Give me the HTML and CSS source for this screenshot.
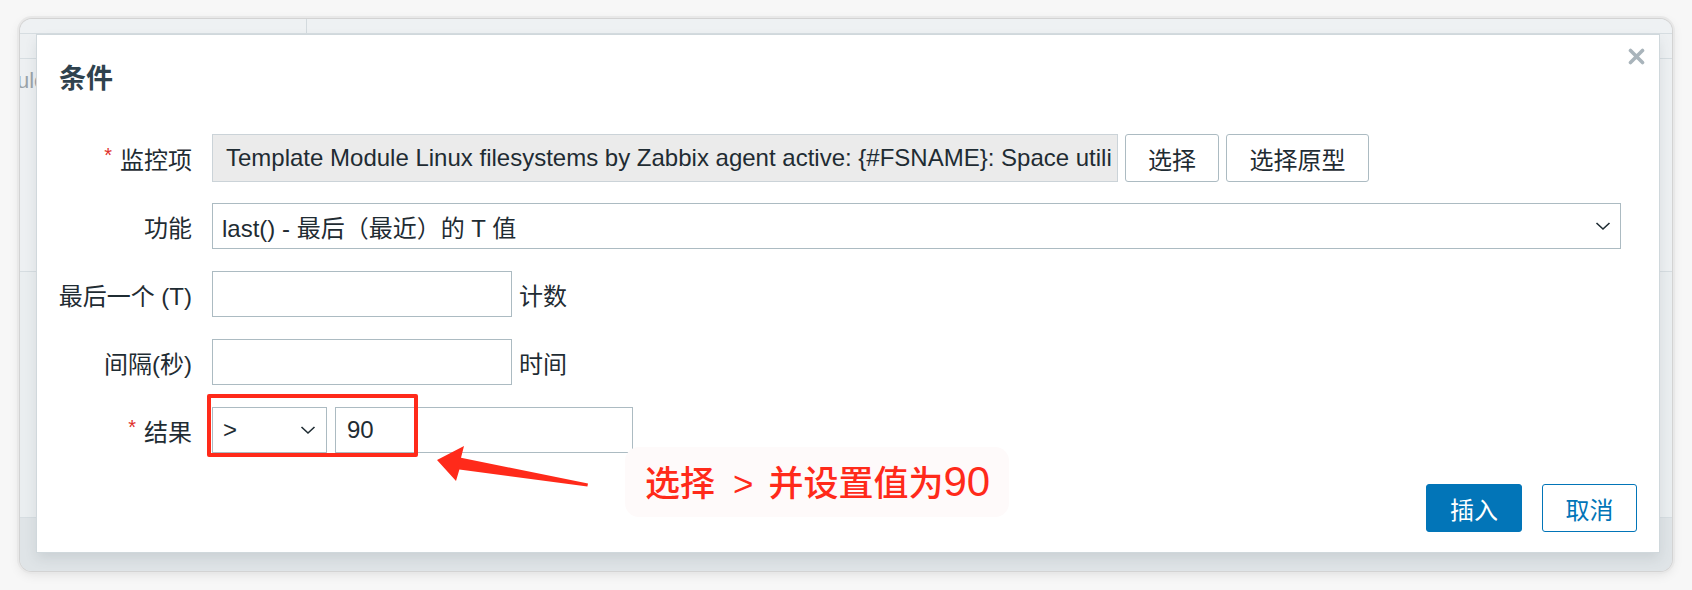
FILE: index.html
```html
<!DOCTYPE html>
<html lang="zh-CN">
<head>
<meta charset="utf-8">
<title>条件</title>
<link rel="stylesheet" href="styles.css">
</head>
<body>
<div class="stage">
  <div class="window">
    <div class="backdrop">
      <div class="bg-row r1"><span class="bg-cell c1"></span><span class="bg-cell"></span></div>
      <div class="bg-row r2"></div>
      <div class="bg-row r3"><span class="bg-text">ulc</span></div>
      <div class="bg-row r4"></div>
      <div class="bg-row r5"></div>
    </div>

    <div class="dialog">
      <div class="dialog-head">
        <h4 class="dialog-title">条件</h4>
        <svg class="close" viewBox="0 0 17 17" width="17" height="17"><path d="M2.5 2.5 L14.5 14.5 M14.5 2.5 L2.5 14.5" stroke="#a9b4bb" stroke-width="3.6" stroke-linecap="round"/></svg>
      </div>

      <div class="form">
        <div class="label"><span class="req">*</span>监控项</div>
        <div class="field">
          <div class="input readonly">Template Module Linux filesystems by Zabbix agent active: {#FSNAME}: Space utili</div>
          <div class="btn btn-sel">选择</div>
          <div class="btn btn-proto">选择原型</div>
        </div>

        <div class="label">功能</div>
        <div class="field">
          <div class="input select select-wide"><span>last() - 最后（最近）的 T 值</span><svg class="chev" width="16" height="10" viewBox="0 0 16 10"><polyline points="1.5,2 8,8 14.5,2" fill="none" stroke="#1f2c33" stroke-width="1.6"/></svg></div>
        </div>

        <div class="label">最后一个 (T)</div>
        <div class="field">
          <div class="input short"></div>
          <span class="unit">计数</span>
        </div>

        <div class="label">间隔(秒)</div>
        <div class="field">
          <div class="input short"></div>
          <span class="unit">时间</span>
        </div>

        <div class="label"><span class="req">*</span>结果</div>
        <div class="field gap8">
          <div class="input select select-op"><span>&gt;</span><svg class="chev" width="16" height="10" viewBox="0 0 16 10"><polyline points="1.5,2 8,8 14.5,2" fill="none" stroke="#1f2c33" stroke-width="1.6"/></svg></div>
          <div class="input value">90</div>
        </div>
      </div>

      <div class="footer">
        <div class="btn btn-primary">插入</div>
        <div class="btn btn-secondary">取消</div>
      </div>
    </div>
  </div>

  <div class="mark-box"></div>
  <svg class="arrow" width="1692" height="590" viewBox="0 0 1692 590">
    <polygon points="437,460 464,446 461,457.8 588,483.4 587.4,486.6 459.4,469.6 456,481" fill="#ff2a1a"/>
  </svg>
  <div class="callout">选择<span class="op">&gt;</span>并设置值为<span class="num">90</span></div>
</div>
</body>
</html>
```

FILE: styles.css
```css
* { box-sizing: border-box; }

html, body {
  margin: 0;
  padding: 0;
}

body {
  width: 1692px;
  height: 590px;
  overflow: hidden;
  background: #f7f7f7;
  font-family: "Liberation Sans", "Noto Sans CJK SC", sans-serif;
  color: #1f2c33;
}

.stage {
  position: relative;
  width: 1692px;
  height: 590px;
  padding: 19px 20px 0 20px;
}

.window {
  position: relative;
  width: 1652px;
  height: 552px;
  border-radius: 12px;
  overflow: hidden;
  background: #edf0f2;
  box-shadow: 0 0 0 1px #d3d3d3, 0 0 0 3px #e8e8e8, 0 3px 12px rgba(0, 0, 0, 0.10);
}

/* background page behind the modal */
.backdrop {
  display: flex;
  flex-direction: column;
  height: 100%;
}

.bg-row {
  display: flex;
  border-bottom: 1px solid #d6dde1;
}

.r1 { height: 15px; background: #eef1f3; }
.r2 { height: 25px; background: #edf0f2; }
.r3 { height: 213px; background: #edf0f2; padding-top: 9px; }
.r4 { height: 246px; background: #eaeef0; }
.r5 { flex: 1; background: #dfe4e7; border-bottom: none; }

.bg-cell { display: block; height: 100%; }
.c1 { width: 287px; border-right: 1px solid #d3dade; }

.bg-text {
  margin-left: -3px;
  font-size: 22px;
  line-height: 26px;
  color: #9aa3a9;
}

/* dialog */
.dialog {
  position: absolute;
  left: 17px;
  top: 16px;
  width: 1622px;
  height: 517px;
  background: #ffffff;
  box-shadow: 0 0 0 1px #d0d8dc, 0 6px 12px rgba(70, 85, 95, 0.14);
}

.dialog-head {
  display: flex;
  justify-content: space-between;
  align-items: flex-start;
  height: 100px;
  padding: 13px 14px 0 22px;
}

.dialog-title {
  margin: 13px 0 0 0;
  font-size: 27px;
  line-height: 36px;
  font-weight: bold;
  color: #2f424e;
}

.close { display: block; }

.form {
  display: grid;
  grid-template-columns: 155px auto;
  grid-auto-rows: 46px;
  column-gap: 20px;
  row-gap: 22px;
}

.label {
  display: flex;
  align-items: center;
  justify-content: flex-end;
  font-size: 24px;
  white-space: nowrap;
  color: #1f2c33;
}

.req {
  align-self: flex-start;
  margin-top: 10px;
  margin-right: 8px;
  font-size: 20px;
  line-height: 20px;
  color: #e0302a;
}

.field {
  display: flex;
  align-items: center;
  gap: 7px;
  font-size: 24px;
}

.field.gap8 { gap: 8px; }

.input {
  height: 46px;
  border: 1px solid #acbbc2;
  background: #ffffff;
  display: flex;
  align-items: center;
  padding: 0 11px;
  white-space: nowrap;
  overflow: hidden;
  flex: none;
}

.readonly {
  width: 906px;
  height: 48px;
  background: #ebebeb;
  border-color: #cbd3d8;
  padding-left: 13px;
}

.select {
  justify-content: space-between;
  padding: 0 9px 0 9px;
}

.select-wide { width: 1409px; }
.select-op { width: 115px; padding: 0 10px 0 10px; }
.short { width: 300px; }
.value { width: 298px; }

.chev { display: block; flex: none; }

.unit { font-size: 24px; }

.btn {
  display: flex;
  align-items: center;
  justify-content: center;
  height: 48px;
  border: 1px solid #acbbc2;
  border-radius: 3px;
  background: #ffffff;
  font-size: 24px;
  color: #1f2c33;
  flex: none;
}

.btn-sel { width: 94px; }
.btn-proto { width: 143px; }

.footer {
  display: flex;
  justify-content: flex-end;
  gap: 20px;
  margin-top: 31px;
  padding-right: 22px;
}

.btn-primary {
  width: 96px;
  background: #0275b8;
  border-color: #0275b8;
  color: #ffffff;
}

.btn-secondary {
  width: 95px;
  border-color: #0275b8;
  color: #0275b8;
}

/* annotations drawn over the screenshot */
.mark-box {
  position: absolute;
  left: 207px;
  top: 394px;
  width: 211px;
  height: 63px;
  border: 4px solid #ff2a1a;
  border-radius: 2px;
}

.arrow {
  position: absolute;
  left: 0;
  top: 0;
  pointer-events: none;
}

.callout {
  position: absolute;
  left: 625px;
  top: 447px;
  width: 384px;
  height: 70px;
  padding-left: 20px;
  border-radius: 14px;
  background: #fefafa;
  font-size: 35px;
  font-weight: 500;
  line-height: 70px;
  color: #ff2a1a;
  white-space: nowrap;
}

.op {
  margin: 0 15px 0 18px;
}

.num {
  font-size: 42px;
}
```
